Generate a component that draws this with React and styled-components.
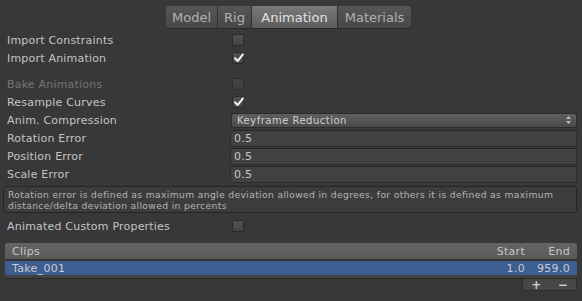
import React from 'react';
import styled, { createGlobalStyle } from 'styled-components';

const Global = createGlobalStyle`
  html, body {
    margin: 0;
    padding: 0;
    background: #383838;
    width: 582px;
    height: 301px;
    overflow: hidden;
  }
  body {
    font-family: "DejaVu Sans", "Liberation Sans", sans-serif;
    font-size: 11px;
    color: #c4c4c4;
  }
`;

const Page = styled.div`
  display: flex;
  flex-direction: column;
  padding: 6px 5px 0 0;
`;

const Tabs = styled.div`
  display: flex;
  margin-left: 166px;
  height: 22px;
  border-radius: 3px;
  box-shadow: 0 1px 0 #2a2a2a;
  overflow: hidden;
  align-self: flex-start;
`;

const Tab = styled.div`
  display: flex;
  align-items: center;
  justify-content: center;
  width: ${p => p.$w}px;
  font-size: 13px;
  color: ${p => (p.$active ? '#e2e2e2' : '#b0b0b0')};
  background: ${p => (p.$active
    ? 'linear-gradient(#7a7a7a, #5c5c5c)'
    : 'linear-gradient(#565656, #474747)')};
  border-right: 1px solid #303030;
  box-sizing: border-box;
  &:last-child { border-right: 0; }
`;

const Rows = styled.div`
  display: flex;
  flex-direction: column;
  padding-top: 3px;
`;

const Row = styled.div`
  display: flex;
  align-items: center;
  height: 18px;
  margin-top: ${p => p.$gap || 0}px;
`;

const Label = styled.div`
  width: ${p => p.$w || 232}px;
  flex: none;
  padding-left: 7px;
  box-sizing: border-box;
  letter-spacing: 0.2px;
  color: ${p => (p.$disabled ? '#757575' : '#c4c4c4')};
`;

const Box = styled.div`
  width: 12px;
  height: 12px;
  box-sizing: border-box;
  border: 1px solid #2a2a2a;
  border-radius: 2px;
  background: linear-gradient(#525252, #444444);
  opacity: ${p => (p.$disabled ? 0.55 : 1)};
  position: relative;
  svg { position: absolute; left: 0; top: -1px; }
`;

const Check = ({ on, disabled }) => (
  <Box $disabled={disabled}>
    {on && (
      <svg width="12" height="12" viewBox="0 0 12 12">
        <path d="M2 6.2 L4.6 9 L10 2.4" fill="none" stroke="#f2f2f2" strokeWidth="2" strokeLinecap="round" strokeLinejoin="round" />
      </svg>
    )}
  </Box>
);

const Select = styled.div`
  flex: 1;
  margin-left: -1px;
  height: 15px;
  box-sizing: border-box;
  border: 1px solid #2a2a2a;
  border-radius: 3px;
  background: linear-gradient(#5e5e5e, #4b4b4b);
  display: flex;
  align-items: center;
  justify-content: space-between;
  padding: 0 5px 0 5px;
  font-size: 10px;
  letter-spacing: 0.5px;
  color: #cfcfcf;
`;

const Field = styled.div`
  flex: 1;
  margin-left: -2px;
  height: 17px;
  box-sizing: border-box;
  border: 1px solid #2c2c2c;
  border-top-color: #262626;
  border-radius: 2px;
  background: #414141;
  display: flex;
  align-items: center;
  padding-left: 3px;
  letter-spacing: 0.3px;
  color: #c8c8c8;
`;

const Help = styled.div`
  margin: 3px 0 0 3px;
  height: 27px;
  box-sizing: border-box;
  border: 1px solid #252525;
  border-radius: 3px;
  background: #3c3c3c;
  padding: 2px 4px 0 4px;
  font-size: 9.2px;
  line-height: 11px;
  letter-spacing: 0.35px;
  color: #b4b4b4;
`;

const List = styled.div`
  margin: 8px 0 0 5px;
  display: flex;
  flex-direction: column;
`;

const ListRow = styled.div`
  display: flex;
  align-items: center;
  height: ${p => p.$h}px;
  padding: 0 7px;
  background: ${p => p.$bg};
  border-radius: ${p => p.$radius || '0'};
  color: ${p => p.$color || '#c4c4c4'};
  letter-spacing: 0.3px;
`;

const Cell = styled.div`
  flex: ${p => (p.$grow ? 1 : 'none')};
  width: ${p => (p.$w ? p.$w + 'px' : 'auto')};
  text-align: ${p => (p.$grow ? 'left' : 'right')};
`;

const ListBody = styled.div`
  background: #414141;
  border-top: 2px solid #333333;
  border-bottom: 1px solid #2a2a2a;
  padding-bottom: 3px;
  border-radius: 0 0 2px 2px;
`;

const Footer = styled.div`
  align-self: flex-end;
  width: 55px;
  height: 12px;
  box-sizing: border-box;
  background: #474747;
  border: 1px solid #2b2b2b;
  border-top: 0;
  border-radius: 0 0 3px 3px;
  display: flex;
  justify-content: space-around;
  align-items: center;
  font-weight: bold;
  font-size: 12px;
  color: #d0d0d0;
`;

const Arrows = () => (
  <svg width="5" height="8" viewBox="0 0 5 8">
    <path d="M2.5 0 L5 3 L0 3 Z M2.5 8 L5 5 L0 5 Z" fill="#bdbdbd" />
  </svg>
);

const tabs = [
  ['Model', 52],
  ['Rig', 34],
  ['Animation', 86],
  ['Materials', 73],
];

export default function App() {
  return (
    <>
      <Global />
      <Page>
        <Tabs>
          {tabs.map(([t, w]) => (
            <Tab key={t} $w={w} $active={t === 'Animation'}>{t}</Tab>
          ))}
        </Tabs>
        <Rows>
          <Row><Label>Import Constraints</Label><Check /></Row>
          <Row><Label>Import Animation</Label><Check on /></Row>
          <Row $gap={8}><Label $disabled>Bake Animations</Label><Check disabled /></Row>
          <Row><Label>Resample Curves</Label><Check on /></Row>
          <Row><Label>Anim. Compression</Label><Select><span>Keyframe Reduction</span><Arrows /></Select></Row>
          <Row><Label>Rotation Error</Label><Field>0.5</Field></Row>
          <Row><Label>Position Error</Label><Field>0.5</Field></Row>
          <Row><Label>Scale Error</Label><Field>0.5</Field></Row>
          <Help>
            Rotation error is defined as maximum angle deviation allowed in degrees, for others it is defined as maximum distance/delta deviation allowed in percents
          </Help>
          <Row $gap={4}><Label>Animated Custom Properties</Label><Check /></Row>
          <List>
            <ListRow $h={16} $bg="linear-gradient(#646464, #5a5a5a)" $radius="3px 3px 0 0" $color="#c8c8c8">
              <Cell $grow>Clips</Cell>
              <Cell $w={50}>Start</Cell>
              <Cell $w={45}>End</Cell>
            </ListRow>
            <ListBody>
              <ListRow $h={14} $bg="#3d5e91" $color="#c8cbd2">
                <Cell $grow>Take_001</Cell>
                <Cell $w={50}>1.0</Cell>
                <Cell $w={45}>959.0</Cell>
              </ListRow>
            </ListBody>
            <Footer><span>+</span><span>−</span></Footer>
          </List>
        </Rows>
      </Page>
    </>
  );
}
